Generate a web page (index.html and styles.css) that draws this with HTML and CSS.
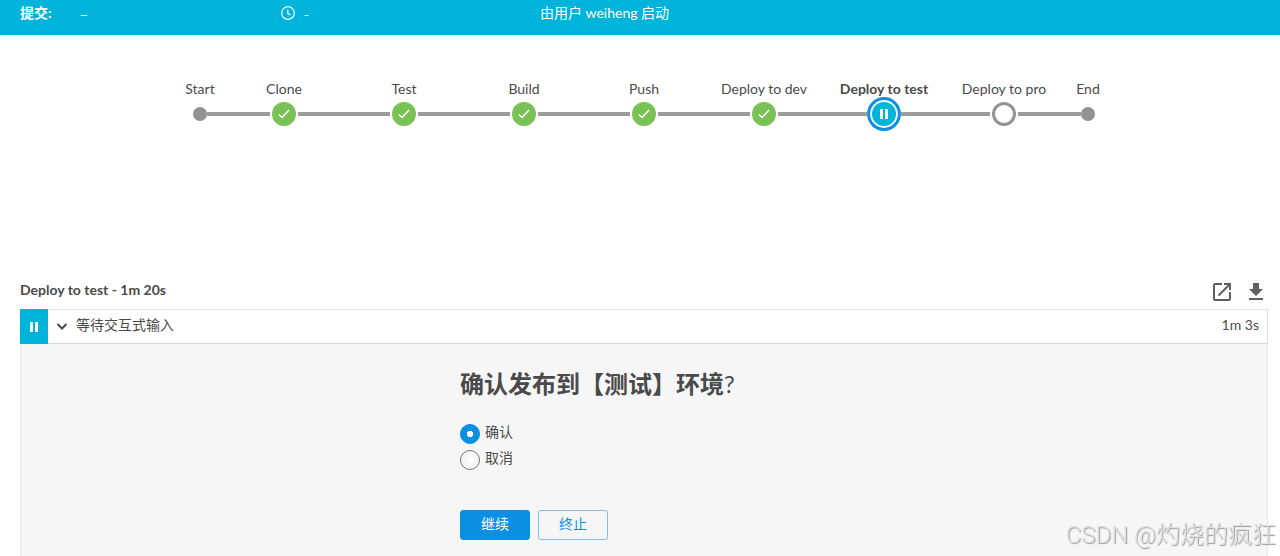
FILE: index.html
```html
<!DOCTYPE html>
<html lang="zh-CN">
<head>
<meta charset="utf-8">
<meta name="viewport" content="width=device-width, initial-scale=1">
<title>Deploy to test</title>
<link rel="stylesheet" href="styles.css">
</head>
<body>
<header class="run-header">
  <div class="run-commit"><strong>提交:</strong><span class="empty">–</span></div>
  <div class="run-time">
    <svg class="clock" viewBox="0 0 16 16" aria-hidden="true"><circle cx="8" cy="8" r="6.3"/><path d="M7.8 4.5v3.8l2.7 1.7"/></svg>
    <span class="empty">-</span>
  </div>
  <div class="run-cause">由用户 weiheng 启动</div>
</header>
<main class="page">
  <ol class="pipeline">
    <li class="stage terminal first"><span class="label">Start</span><span class="track"><i class="line"></i><i class="dot"></i><i class="line"></i></span></li>
    <li class="stage"><span class="label">Clone</span><span class="track"><i class="line"></i><svg class="marker done" viewBox="0 0 24 24"><path d="M7 12.5l3 3 7-7.5"/></svg><i class="line"></i></span></li>
    <li class="stage"><span class="label">Test</span><span class="track"><i class="line"></i><svg class="marker done" viewBox="0 0 24 24"><path d="M7 12.5l3 3 7-7.5"/></svg><i class="line"></i></span></li>
    <li class="stage"><span class="label">Build</span><span class="track"><i class="line"></i><svg class="marker done" viewBox="0 0 24 24"><path d="M7 12.5l3 3 7-7.5"/></svg><i class="line"></i></span></li>
    <li class="stage"><span class="label">Push</span><span class="track"><i class="line"></i><svg class="marker done" viewBox="0 0 24 24"><path d="M7 12.5l3 3 7-7.5"/></svg><i class="line"></i></span></li>
    <li class="stage"><span class="label">Deploy to dev</span><span class="track"><i class="line"></i><svg class="marker done" viewBox="0 0 24 24"><path d="M7 12.5l3 3 7-7.5"/></svg><i class="line"></i></span></li>
    <li class="stage current"><span class="label">Deploy to test</span><span class="track"><i class="line"></i><svg class="paused" viewBox="0 0 34 34"><circle class="halo" cx="17" cy="17" r="15.4"/><circle class="core" cx="17" cy="17" r="12"/><path d="M13 12h3v10h-3zM18 12h3v10h-3z"/></svg><i class="line"></i></span></li>
    <li class="stage"><span class="label">Deploy to pro</span><span class="track"><i class="line"></i><i class="marker pending"></i><i class="line"></i></span></li>
    <li class="stage terminal last"><span class="label">End</span><span class="track"><i class="line"></i><i class="dot"></i><i class="line"></i></span></li>
  </ol>

  <section class="steps">
    <div class="steps-header">
      <h2 class="steps-title">Deploy to test - 1m 20s</h2>
      <div class="steps-tools">
        <a href="#" aria-label="Open in new tab"><svg viewBox="0 0 24 24"><path d="M19 19H5V5h7V3H5a2 2 0 0 0-2 2v14a2 2 0 0 0 2 2h14a2 2 0 0 0 2-2v-7h-2v7zM14 3v2h3.6l-9.8 9.8 1.4 1.4L19 6.4V10h2V3h-7z"/></svg></a>
        <a href="#" aria-label="Download"><svg viewBox="0 0 24 24"><path d="M19 9h-4V3H9v6H5l7 7 7-7zM5 18v2h14v-2H5z"/></svg></a>
      </div>
    </div>
    <button type="button" class="step" aria-expanded="true">
      <span class="step-status"><svg viewBox="0 0 10 10" aria-hidden="true"><path d="M1 0h3v10h-3zM6 0h3v10h-3z"/></svg></span>
      <svg class="chevron" viewBox="0 0 12 12" aria-hidden="true"><path d="M1.5 3L6 7.5 10.500 3"/></svg>
      <span class="step-name">等待交互式输入</span>
      <span class="step-duration">1m 3s</span>
    </button>
    <div class="panel">
      <form class="prompt">
        <h3 class="prompt-title">确认发布到【测试】环境<span class="mark">?</span></h3>
        <div class="choices">
          <label class="choice"><input type="radio" name="answer" checked><span>确认</span></label>
          <label class="choice"><input type="radio" name="answer"><span>取消</span></label>
        </div>
        <div class="actions">
          <button type="button" class="btn primary">继续</button>
          <button type="button" class="btn">终止</button>
        </div>
      </form>
    </div>
  </section>
</main>
<div class="watermark">CSDN @灼烧的疯狂</div>
</body>
</html>
```
FILE: styles.css
```css
* { box-sizing: border-box; }

body {
  margin: 0;
  min-height: 100vh;
  display: flex;
  flex-direction: column;
  background: #fff;
  color: #4a4a4a;
  font: 14px/20px Lato, "Noto Sans CJK SC", sans-serif;
}

button { font: inherit; color: inherit; }

.run-header {
  display: grid;
  grid-template-columns: 260px 260px 1fr;
  padding: 3px 20px 12px;
  background: #00b3da;
  color: #fff;
}
.run-commit { display: grid; grid-template-columns: 60px 1fr; }
.run-time { display: flex; align-items: center; gap: 8px; }
.empty { font-family: "Noto Sans CJK SC", sans-serif; line-height: 20px; }
.clock { width: 16px; height: 16px; fill: none; stroke: #fff; stroke-width: 1.2; }

.page {
  flex: 1;
  display: flex;
  flex-direction: column;
  padding: 44px 12px 0 20px;
}

.pipeline {
  display: flex;
  justify-content: center;
  min-height: 200px;
  margin: 0;
  padding: 0;
  list-style: none;
}
.stage { width: 120px; }
.terminal { width: 48px; }
.label {
  display: block;
  line-height: 20px;
  height: 18px;
  text-align: center;
  white-space: nowrap;
}
.current .label { font-weight: 700; }
.track { display: flex; align-items: center; height: 34px; }
.line { flex: 1; height: 4px; background: #9b9b9b; }
.first .line:first-child,
.last .line:last-child { visibility: hidden; }
.dot { width: 14px; height: 14px; border-radius: 50%; background: #949393; }
.marker { width: 24px; height: 24px; margin: 0 2px; border-radius: 50%; }
.done { background: #78c155; fill: none; stroke: #fff; stroke-width: 1.5; }
.pending { border: 3px solid #949393; }
.paused { width: 34px; height: 34px; fill: #fff; }
.halo { fill: #fff; stroke: #0a8fe2; stroke-width: 3; }
.core { fill: #00b3da; }

.steps { flex: 1; display: flex; flex-direction: column; }
.steps-header {
  display: flex;
  justify-content: space-between;
  height: 30px;
}
.steps-title { margin: 0; font-size: 14px; line-height: 22px; }
.steps-tools { display: flex; gap: 10px; padding-top: 1px; }
.steps-tools svg { display: block; width: 24px; height: 24px; fill: #5f5f5f; }

.step {
  display: flex;
  align-items: center;
  height: 35px;
  padding: 0 8px 0 0;
  border: 1px solid #e2e2e2;
  border-left: 0;
  border-bottom-color: #d8d8d8;
  background: #fff;
  text-align: left;
}
.step-status {
  display: flex;
  align-items: center;
  justify-content: center;
  width: 28px;
  height: 35px;
  background: #00b3da;
}
.step-status svg { width: 10px; height: 10px; fill: #fff; }
.chevron { width: 12px; height: 12px; margin: 0 8px; fill: none; stroke: #4a4a4a; stroke-width: 2; }
.step-name { flex: 1; }
.step-name,
.step-duration { padding-bottom: 3px; }

.panel {
  flex: 1;
  padding: 24px 20px 16px;
  border: 1px solid #e8e8e8;
  border-width: 0 1px;
  background: #f6f6f6;
}
.prompt { max-width: 368px; margin: 0 auto; }
.prompt-title { margin: 0; font-size: 24px; line-height: 32px; }
.mark { font-weight: 400; }
.choices { display: grid; gap: 6px; padding: 24px 0 40px; }
.choice { display: flex; gap: 5px; height: 20px; line-height: 16px; }
.choice input {
  appearance: none;
  width: 20px;
  height: 20px;
  margin: 0;
  border: 1px solid #757575;
  border-radius: 50%;
  background: radial-gradient(circle, #fff 3px, transparent 3px);
}
.choice input:checked {
  border-color: #0a8fe2;
  background: #0a8fe2 radial-gradient(circle, #fff 3px, #0a8fe2 3px);
}
.actions { display: flex; gap: 8px; }
.btn {
  width: 70px;
  height: 30px;
  padding: 0 0 2px;
  border: 1px solid #7fbfec;
  border-radius: 3px;
  background: transparent;
  color: #0a8fe2;
}
.primary { border-color: #0a8fe2; background: #0a8fe2; color: #fff; }

.watermark {
  position: fixed;
  right: 4px;
  bottom: 5px;
  font: 300 24px/32px Roboto, "Noto Sans CJK SC", sans-serif;
  color: #dedede;
  text-shadow: 1px 1px 1px #999;
  pointer-events: none;
}
```
